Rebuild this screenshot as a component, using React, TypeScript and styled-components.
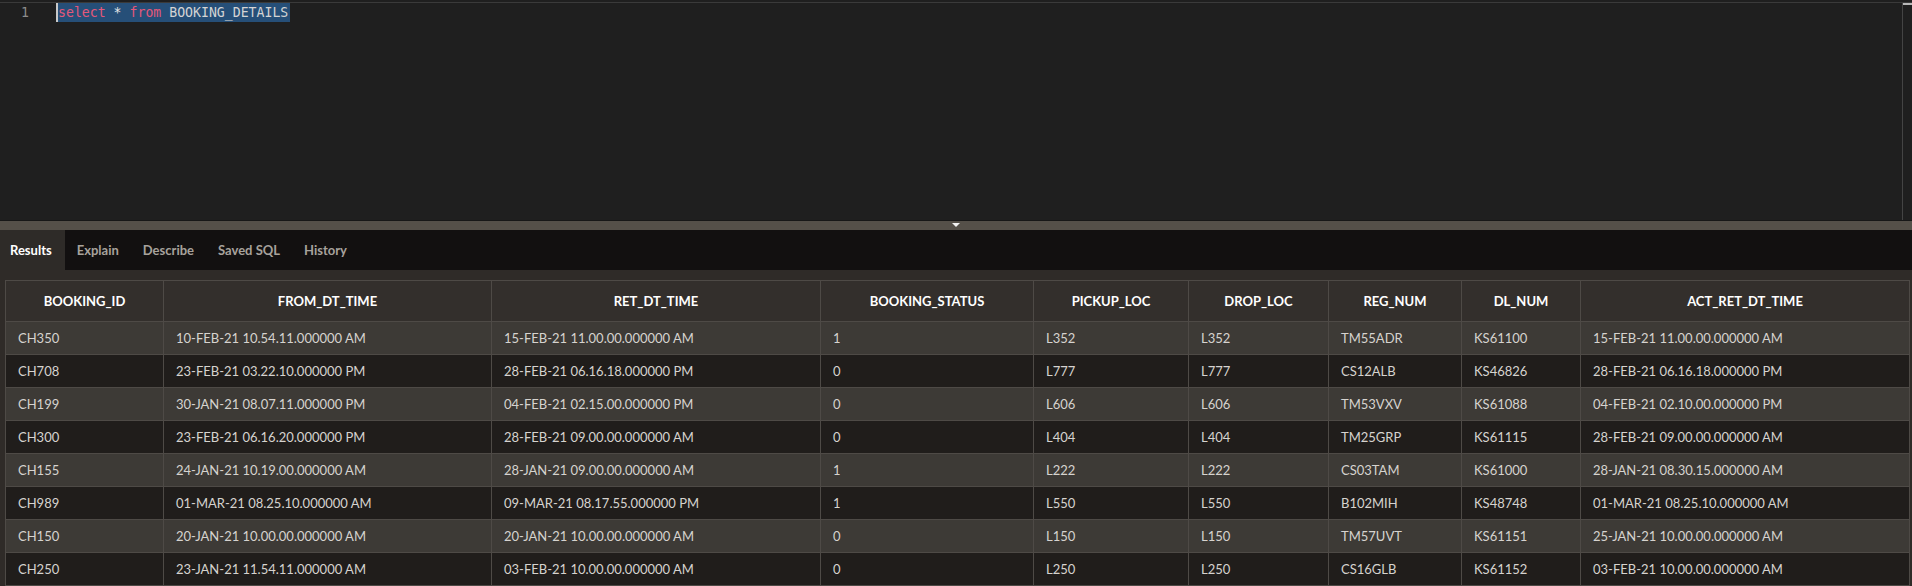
import React from "react";
import styled, { createGlobalStyle } from "styled-components";

const Global = createGlobalStyle`
  html, body { margin: 0; padding: 0; background: #1f1f1f; }
  body { font-family: Lato, "Open Sans", sans-serif; }
  * { box-sizing: border-box; }
`;

const Page = styled.div`
  width: 1912px;
  height: 586px;
  display: flex;
  flex-direction: column;
  overflow: hidden;
  background: #1f1f1f;
`;

const Editor = styled.div`
  height: 221px;
  padding-top: 2px;
  display: flex;
  flex-direction: column;
  background: #1f1f1f;
`;

const EditorInner = styled.div`
  flex: 1;
  display: flex;
  border-top: 1px solid #3a3a3a;
  border-bottom: 1px solid #171717;
`;

const CodeArea = styled.div`
  flex: 1;
  display: flex;
  align-items: flex-start;
  font-family: "DejaVu Sans Mono", "Liberation Mono", monospace;
  font-size: 13.2px;
  line-height: 19px;
`;

const Gutter = styled.div`
  width: 57px;
  padding-left: 21px;
  color: #8c8c8c;
`;

const Line = styled.div`
  display: flex;
  height: 19px;
`;

const Selection = styled.span`
  background: #264f78;
  color: #d4d4d4;
  border-left: 2px solid #c8c8c8;
  padding-right: 2px;
  margin-left: -1px;
`;

const Kw = styled.span`
  color: #e4587a;
`;

const Op = styled.span`
  color: #e8e8e8;
`;

const ScrollTrack = styled.div`
  width: 10px;
  border-left: 1px solid #444;
  position: relative;
`;

const ScrollThumb = styled.div`
  position: absolute;
  top: 0;
  left: 0;
  right: 0;
  height: 2px;
  background: #b8b8b8;
`;

const Splitter = styled.div`
  height: 9px;
  background: #555049;
  display: flex;
  justify-content: center;
  padding-top: 2px;
`;

const Arrow = styled.div`
  width: 0;
  height: 0;
  border-left: 4px solid transparent;
  border-right: 4px solid transparent;
  border-top: 4px solid #f2f2f2;
`;

const Tabs = styled.div`
  height: 40px;
  background: #121010;
  display: flex;
  align-items: stretch;
`;

const Tab = styled.div<{ $active?: boolean }>`
  display: flex;
  align-items: center;
  padding: 0 ${(p) => (p.$active ? "13px" : "12px")} 0 ${(p) => (p.$active ? "10px" : "12px")};
  background: ${(p) => (p.$active ? "#2e2b28" : "transparent")};
  color: ${(p) => (p.$active ? "#ffffff" : "#a7a29c")};
  font-family: Lato, sans-serif;
  font-weight: 700;
  font-size: 13px;
`;

const Results = styled.div`
  flex: 1;
  background: #2f2b28;
  padding: 10px 3px 0 5px;
  overflow: hidden;
`;

const Table = styled.table`
  border-collapse: collapse;
  table-layout: fixed;
  width: 1904px;
  font-family: Lato, sans-serif;
  font-size: 13px;
`;

const Th = styled.th`
  height: 41px;
  background: #332f2c;
  color: #ffffff;
  font-weight: 700;
  font-size: 13px;
  text-align: center;
  border: 1px solid #4e4a46;
  padding: 0 8px;
`;

const Tr = styled.tr<{ $odd: boolean }>`
  background: ${(p) => (p.$odd ? "#3d3a36" : "#201d1b")};
`;

const Td = styled.td`
  height: 33px;
  color: #d6d3cf;
  border: 1px solid #4e4a46;
  padding: 0 12px;
  white-space: nowrap;
  overflow: hidden;
`;

const columns: [string, number][] = [
  ["BOOKING_ID", 158],
  ["FROM_DT_TIME", 328],
  ["RET_DT_TIME", 329],
  ["BOOKING_STATUS", 213],
  ["PICKUP_LOC", 155],
  ["DROP_LOC", 140],
  ["REG_NUM", 133],
  ["DL_NUM", 119],
  ["ACT_RET_DT_TIME", 329],
];

const rows: string[][] = [
  ["CH350", "10-FEB-21 10.54.11.000000 AM", "15-FEB-21 11.00.00.000000 AM", "1", "L352", "L352", "TM55ADR", "KS61100", "15-FEB-21 11.00.00.000000 AM"],
  ["CH708", "23-FEB-21 03.22.10.000000 PM", "28-FEB-21 06.16.18.000000 PM", "0", "L777", "L777", "CS12ALB", "KS46826", "28-FEB-21 06.16.18.000000 PM"],
  ["CH199", "30-JAN-21 08.07.11.000000 PM", "04-FEB-21 02.15.00.000000 PM", "0", "L606", "L606", "TM53VXV", "KS61088", "04-FEB-21 02.10.00.000000 PM"],
  ["CH300", "23-FEB-21 06.16.20.000000 PM", "28-FEB-21 09.00.00.000000 AM", "0", "L404", "L404", "TM25GRP", "KS61115", "28-FEB-21 09.00.00.000000 AM"],
  ["CH155", "24-JAN-21 10.19.00.000000 AM", "28-JAN-21 09.00.00.000000 AM", "1", "L222", "L222", "CS03TAM", "KS61000", "28-JAN-21 08.30.15.000000 AM"],
  ["CH989", "01-MAR-21 08.25.10.000000 AM", "09-MAR-21 08.17.55.000000 PM", "1", "L550", "L550", "B102MIH", "KS48748", "01-MAR-21 08.25.10.000000 AM"],
  ["CH150", "20-JAN-21 10.00.00.000000 AM", "20-JAN-21 10.00.00.000000 AM", "0", "L150", "L150", "TM57UVT", "KS61151", "25-JAN-21 10.00.00.000000 AM"],
  ["CH250", "23-JAN-21 11.54.11.000000 AM", "03-FEB-21 10.00.00.000000 AM", "0", "L250", "L250", "CS16GLB", "KS61152", "03-FEB-21 10.00.00.000000 AM"],
];

const tabs = ["Results", "Explain", "Describe", "Saved SQL", "History"];

export default function App() {
  return (
    <Page>
      <Global />
      <Editor>
        <EditorInner>
          <CodeArea>
            <Gutter>1</Gutter>
            <Line>
              <Selection>
                <Kw>select</Kw> <Op>*</Op> <Kw>from</Kw> BOOKING_DETAILS
              </Selection>
            </Line>
          </CodeArea>
          <ScrollTrack>
            <ScrollThumb />
          </ScrollTrack>
        </EditorInner>
      </Editor>
      <Splitter>
        <Arrow />
      </Splitter>
      <Tabs>
        {tabs.map((t, i) => (
          <Tab key={t} $active={i === 0}>
            {t}
          </Tab>
        ))}
      </Tabs>
      <Results>
        <Table>
          <colgroup>
            {columns.map(([n, w]) => (
              <col key={n} style={{ width: w }} />
            ))}
          </colgroup>
          <thead>
            <tr>
              {columns.map(([n]) => (
                <Th key={n}>{n}</Th>
              ))}
            </tr>
          </thead>
          <tbody>
            {rows.map((r, i) => (
              <Tr key={r[0]} $odd={i % 2 === 0}>
                {r.map((c, j) => (
                  <Td key={j}>{c}</Td>
                ))}
              </Tr>
            ))}
          </tbody>
        </Table>
      </Results>
    </Page>
  );
}
